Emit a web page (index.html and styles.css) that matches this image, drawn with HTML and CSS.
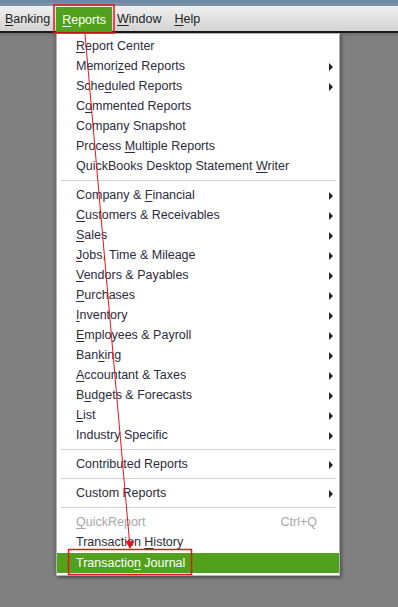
FILE: index.html
```html
<!DOCTYPE html>
<html lang="en">
<head>
    <meta charset="UTF-8">
    <title>Reports menu</title>
    <link rel="stylesheet" href="styles.css">
</head>
<body>
    <div class="title-strip"></div>
    <div class="menubar">
        <span class="menubar-item"><u>B</u>anking</span>
        <span class="menubar-item active"><u>R</u>eports</span>
        <span class="menubar-item"><u>W</u>indow</span>
        <span class="menubar-item help"><u>H</u>elp</span>
    </div>

    <div class="workspace"></div>

    <ul class="dropdown">
        <li class="item"><u>R</u>eport Center</li>
        <li class="item sub">Memori<u>z</u>ed Reports</li>
        <li class="item sub">Sche<u>d</u>uled Reports</li>
        <li class="item">C<u>o</u>mmented Reports</li>
        <li class="item">Company Snapshot</li>
        <li class="item">Process <u>M</u>ultiple Reports</li>
        <li class="item">QuickBooks Desktop Statement <u>W</u>riter</li>
        <li class="sep"></li>
        <li class="item sub">Company &amp; <u>F</u>inancial</li>
        <li class="item sub"><u>C</u>ustomers &amp; Receivables</li>
        <li class="item sub"><u>S</u>ales</li>
        <li class="item sub"><u>J</u>obs, Time &amp; Mileage</li>
        <li class="item sub"><u>V</u>endors &amp; Payables</li>
        <li class="item sub"><u>P</u>urchases</li>
        <li class="item sub"><u>I</u>nventory</li>
        <li class="item sub"><u>E</u>mployees &amp; Payroll</li>
        <li class="item sub">Ban<u>k</u>ing</li>
        <li class="item sub"><u>A</u>ccountant &amp; Taxes</li>
        <li class="item sub">B<u>u</u>dgets &amp; Forecasts</li>
        <li class="item sub"><u>L</u>ist</li>
        <li class="item sub">Industry Specific</li>
        <li class="sep"></li>
        <li class="item sub">Contributed Reports</li>
        <li class="sep"></li>
        <li class="item sub">Custom Reports</li>
        <li class="sep"></li>
        <li class="item disabled"><span class="shortcut">Ctrl+Q</span><u>Q</u>uickReport</li>
        <li class="item">Transaction <u>H</u>istory</li>
        <li class="item selected">Transactio<u>n</u> Journal</li>
    </ul>

    <svg class="annotations" width="398" height="607" viewBox="0 0 398 607">
        <rect x="54" y="5" width="60" height="28" fill="none" stroke="#e8141c" stroke-width="1.5"/>
        <line x1="85" y1="34" x2="129.5" y2="542" stroke="#e8141c" stroke-width="1"/>
        <polygon points="125.5,541 134,541 130,549" fill="#e8141c"/>
        <rect x="68.5" y="549.5" width="123" height="25" fill="none" stroke="#e8141c" stroke-width="1.5"/>
    </svg>
</body>
</html>
```

FILE: styles.css
```css
body {
    margin: 0;
    background-color: #808080;
    font-family: 'Liberation Sans', Arial, sans-serif;
    font-size: 12px;
    color: #2c2c3c;
    width: 398px;
    height: 607px;
    overflow: hidden;
    position: relative;
}

u {
    text-decoration-thickness: 1px;
    text-underline-offset: 2px;
}

.title-strip {
    height: 6px;
    background: linear-gradient(#6a86a0, #7e97ad);
}

.menubar {
    display: flex;
    align-items: stretch;
    height: 25px;
    background: linear-gradient(#f0f0f0, #d3d3d3);
    border-bottom: 2px solid #1a1a1a;
    font-size: 12.5px;
}

.menubar-item {
    display: flex;
    align-items: center;
    padding: 0 5px;
    color: #222;
}

.menubar-item:first-child {
    padding-right: 6px;
}

.menubar-item.active {
    background-color: #52a11d;
    color: #ffffff;
    margin-top: 1px;
    margin-bottom: -1px;
    padding: 0 6px;
}

.menubar-item.help {
    margin-left: 3px;
}

.workspace {
    height: 574px;
    background: linear-gradient(#6e6e6e 0, #808080 4px);
}

.dropdown {
    position: absolute;
    left: 56px;
    top: 33px;
    width: 282px;
    margin: 0;
    padding: 2px 0 2px;
    list-style: none;
    background: #ffffff;
    border: 1px solid #b4b4b4;
    box-shadow: 2px 2px 3px rgba(0, 0, 0, 0.35), -2px 0 3px rgba(0, 0, 0, 0.15);
    font-size: 12.5px;
}

.item {
    position: relative;
    height: 20px;
    line-height: 20px;
    padding: 0 8px 0 19px;
    white-space: nowrap;
}

.item.sub::after {
    content: '';
    position: absolute;
    right: 6px;
    top: 7px;
    border-left: 4px solid #222;
    border-top: 4px solid transparent;
    border-bottom: 4px solid transparent;
}

.item.disabled {
    color: #a8a8a8;
}

.shortcut {
    float: right;
    margin-right: 14px;
}

.item.selected {
    background-color: #52a11d;
    color: #ffffff;
    margin-top: 1px;
}

.sep {
    height: 1px;
    margin: 4px 3px 4px 4px;
    background: #d2d2d2;
}

.annotations {
    position: absolute;
    left: 0;
    top: 0;
    pointer-events: none;
}
```
